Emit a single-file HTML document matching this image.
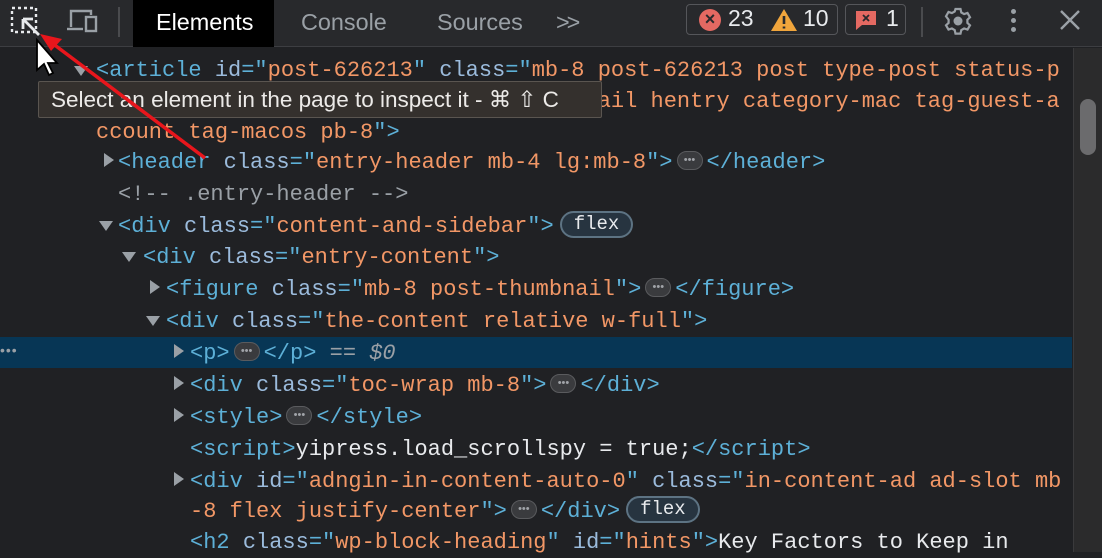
<!DOCTYPE html>
<html><head><meta charset="utf-8"><style>
*{margin:0;padding:0;box-sizing:border-box}
body{width:1102px;height:552px;overflow:hidden;background:#202124;position:relative;font-family:"Liberation Sans",sans-serif}
.tb{position:absolute;left:0;top:0;width:1102px;height:47px;background:#28292c;border-bottom:1px solid #3d3e42}
.tab{position:absolute;top:0;height:47px;line-height:44px;font-size:23.4px;color:#9aa0a6}
.ln{position:absolute;white-space:pre;font-family:"Liberation Mono",monospace;font-size:22px;line-height:31px;height:31px;color:#e8eaed}
.t{color:#5db0d7}.an{color:#9bbbdc}.av{color:#f29766}.c{color:#9aa0a6}
.tri{position:absolute;width:0;height:0}
.tr{border-top:7px solid transparent;border-bottom:7px solid transparent;border-left:10px solid #9aa0a6}
.td{border-left:7px solid transparent;border-right:7px solid transparent;border-top:10px solid #9aa0a6}
.el{display:inline-block;width:26px;height:19px;border:1.5px solid #5a5b5e;background:#3a3b3e;border-radius:10px;vertical-align:middle;margin:0 4px;position:relative;top:-2px;text-align:center;font-family:"Liberation Sans",sans-serif;font-size:11px;line-height:16px;color:#a0a3a8;letter-spacing:0}
.fx{display:inline-block;height:27px;padding:0 12px;border:2px solid #5d7383;background:#273440;border-radius:14px;font-family:"Liberation Mono",monospace;font-size:19px;line-height:23px;color:#e8eaed;vertical-align:middle;margin-left:6px;position:relative;top:-2px}
</style></head><body>
<div class="tb">
<svg style="position:absolute;left:9px;top:5px" width="32" height="32" viewBox="0 0 32 32"><rect x="3" y="3" width="24" height="24" fill="none" stroke="#e8eaed" stroke-width="2.4" stroke-dasharray="3 3"/><path d="M30 30L14 14M14 14h10M14 14v10" stroke="#e8eaed" stroke-width="2.8" fill="none"/></svg>
<svg style="position:absolute;left:66px;top:7px" width="34" height="28" viewBox="0 0 34 28"><path d="M5 20V4h20v4" stroke="#9aa0a6" stroke-width="2.4" fill="none"/><path d="M1 22h16" stroke="#9aa0a6" stroke-width="2.4"/><rect x="20" y="10" width="10" height="14" fill="none" stroke="#9aa0a6" stroke-width="2.4"/></svg>
<div style="position:absolute;left:118px;top:7px;width:2px;height:30px;background:#4a4b4e"></div>
<div style="position:absolute;left:133px;top:0;width:141px;height:47px;background:#000"></div>
<div class="tab" style="left:156px;color:#fff">Elements</div>
<div class="tab" style="left:301px">Console</div>
<div class="tab" style="left:437px">Sources</div>
<div class="tab" style="left:556px;letter-spacing:-3px">&gt;&gt;</div>
<div style="position:absolute;left:686px;top:4px;width:152px;height:31px;border:1.5px solid #55565a;border-radius:4px"></div>
<div style="position:absolute;left:699px;top:9px;width:22px;height:22px;border-radius:50%;background:#e46962;color:#28292c;font-size:18px;line-height:21px;text-align:center;font-weight:bold">×</div>
<div style="position:absolute;left:728px;top:5px;font-size:23px;color:#e8eaed">23</div>
<svg style="position:absolute;left:770px;top:8px" width="28" height="24" viewBox="0 0 28 24"><path d="M14 1L27 23H1Z" fill="#f0a53c"/><path d="M14 8v8M14 18.5v2" stroke="#28292c" stroke-width="2.6"/></svg>
<div style="position:absolute;left:803px;top:5px;font-size:23px;color:#e8eaed">10</div>
<div style="position:absolute;left:845px;top:4px;width:61px;height:31px;border:1.5px solid #55565a;border-radius:4px"></div>
<svg style="position:absolute;left:855px;top:9px" width="22" height="22" viewBox="0 0 22 22"><path d="M1 2h20v14H7l-6 5z" fill="#e46962"/><path d="M8 6l6 6M14 6l-6 6" stroke="#28292c" stroke-width="1.8"/></svg>
<div style="position:absolute;left:886px;top:5px;font-size:23px;color:#e8eaed">1</div>
<div style="position:absolute;left:921px;top:7px;width:2px;height:30px;background:#4a4b4e"></div>
<svg style="position:absolute;left:943px;top:6px" width="30" height="30" viewBox="0 0 30 30"><circle cx="15" cy="15" r="4.5" fill="#9aa0a6"/><path d="M12.5 3h5l.8 3.5 2.8 1.6 3.4-1.1 2.5 4.3-2.6 2.4v3.2l2.6 2.4-2.5 4.3-3.4-1.1-2.8 1.6-.8 3.5h-5l-.8-3.5-2.8-1.6-3.4 1.1-2.5-4.3 2.6-2.4v-3.2L3 10.3l2.5-4.3 3.4 1.1 2.8-1.6z" fill="none" stroke="#9aa0a6" stroke-width="2.2"/></svg>
<div style="position:absolute;left:1011px;top:9px;width:5px;height:5px;border-radius:50%;background:#9aa0a6;box-shadow:0 9px 0 #9aa0a6,0 18px 0 #9aa0a6"></div>
<svg style="position:absolute;left:1059px;top:9px" width="22" height="22" viewBox="0 0 22 22"><path d="M2 2l18 18M20 2L2 20" stroke="#9aa0a6" stroke-width="2.4"/></svg>
</div>

<div style="position:absolute;left:1073px;top:48px;width:29px;height:504px;background:#2b2b2c;border-left:1px solid #3a3a3c"></div>
<div style="position:absolute;left:1080px;top:99px;width:16px;height:56px;border-radius:8px;background:#6b6b6d"></div>

<div style="position:absolute;left:0;top:337px;width:1072px;height:31px;background:#073655"></div>
<div style="position:absolute;left:0;top:342px;color:#9aa0a6;font-size:14px;letter-spacing:1px">•••</div>

<div class="tri td" style="left:74px;top:66px"></div>
<div class="ln" style="left:96px;top:55px"><span class="t">&lt;article</span> <span class="an">id</span><span class="t">="</span><span class="av">post-626213</span><span class="t">"</span> <span class="an">class</span><span class="t">="</span><span class="av">mb-8 post-626213 post type-post status-p</span></div>
<div class="ln" style="left:96px;top:86px"><span class="av">ublish format-standard has-post-thumbn</span><span class="av">ail hentry category-mac tag-guest-a</span></div>
<div class="ln" style="left:96px;top:117px"><span class="av">ccount tag-macos pb-8</span><span class="t">"&gt;</span></div>
<div class="tri tr" style="left:104px;top:153px"></div>
<div class="ln" style="left:118px;top:147px"><span class="t">&lt;header</span> <span class="an">class</span><span class="t">="</span><span class="av">entry-header mb-4 lg:mb-8</span><span class="t">"&gt;</span><span class="el">•••</span><span class="t">&lt;/header&gt;</span></div>
<div class="ln c" style="left:118px;top:179px">&lt;!-- .entry-header --&gt;</div>
<div class="tri td" style="left:99px;top:221px"></div>
<div class="ln" style="left:118px;top:211px"><span class="t">&lt;div</span> <span class="an">class</span><span class="t">="</span><span class="av">content-and-sidebar</span><span class="t">"&gt;</span><span class="fx">flex</span></div>
<div class="tri td" style="left:122px;top:252px"></div>
<div class="ln" style="left:143px;top:242px"><span class="t">&lt;div</span> <span class="an">class</span><span class="t">="</span><span class="av">entry-content</span><span class="t">"&gt;</span></div>
<div class="tri tr" style="left:150px;top:280px"></div>
<div class="ln" style="left:166px;top:274px"><span class="t">&lt;figure</span> <span class="an">class</span><span class="t">="</span><span class="av">mb-8 post-thumbnail</span><span class="t">"&gt;</span><span class="el">•••</span><span class="t">&lt;/figure&gt;</span></div>
<div class="tri td" style="left:146px;top:316px"></div>
<div class="ln" style="left:166px;top:306px"><span class="t">&lt;div</span> <span class="an">class</span><span class="t">="</span><span class="av">the-content relative w-full</span><span class="t">"&gt;</span></div>
<div class="tri tr" style="left:174px;top:344px"></div>
<div class="ln" style="left:190px;top:338px"><span class="t">&lt;p&gt;</span><span class="el">•••</span><span class="t">&lt;/p&gt;</span> <span class="c">== <i>$0</i></span></div>
<div class="tri tr" style="left:174px;top:376px"></div>
<div class="ln" style="left:190px;top:370px"><span class="t">&lt;div</span> <span class="an">class</span><span class="t">="</span><span class="av">toc-wrap mb-8</span><span class="t">"&gt;</span><span class="el">•••</span><span class="t">&lt;/div&gt;</span></div>
<div class="tri tr" style="left:174px;top:408px"></div>
<div class="ln" style="left:190px;top:402px"><span class="t">&lt;style&gt;</span><span class="el">•••</span><span class="t">&lt;/style&gt;</span></div>
<div class="ln" style="left:190px;top:434px"><span class="t">&lt;script&gt;</span>yipress.load_scrollspy = true;<span class="t">&lt;/script&gt;</span></div>
<div class="tri tr" style="left:174px;top:472px"></div>
<div class="ln" style="left:190px;top:466px"><span class="t">&lt;div</span> <span class="an">id</span><span class="t">="</span><span class="av">adngin-in-content-auto-0</span><span class="t">"</span> <span class="an">class</span><span class="t">="</span><span class="av">in-content-ad ad-slot mb</span></div>
<div class="ln" style="left:190px;top:496px"><span class="av">-8 flex justify-center</span><span class="t">"&gt;</span><span class="el">•••</span><span class="t">&lt;/div&gt;</span><span class="fx">flex</span></div>
<div class="ln" style="left:190px;top:527px"><span class="t">&lt;h2</span> <span class="an">class</span><span class="t">="</span><span class="av">wp-block-heading</span><span class="t">"</span> <span class="an">id</span><span class="t">="</span><span class="av">hints</span><span class="t">"&gt;</span>Key Factors to Keep in</div>

<div style="position:absolute;left:38px;top:81px;width:564px;height:37px;background:#34302d;border:1px solid #5a5550;border-radius:2px;color:#eceae8;font-size:22.5px;line-height:35px;padding-left:12px;white-space:nowrap">Select an element in the page to inspect it - ⌘ ⇧ C</div>

<svg style="position:absolute;left:0;top:0" width="260" height="200"><path d="M205 158L48 40" stroke="#e8161c" stroke-width="3.5"/><path d="M40 34l22 5-11 12z" fill="#e8161c"/>
<path d="M37 40v30l7-6 5 11 4-2-5-10h9z" fill="#fff" stroke="#000" stroke-width="1.8"/></svg>
</body></html>
